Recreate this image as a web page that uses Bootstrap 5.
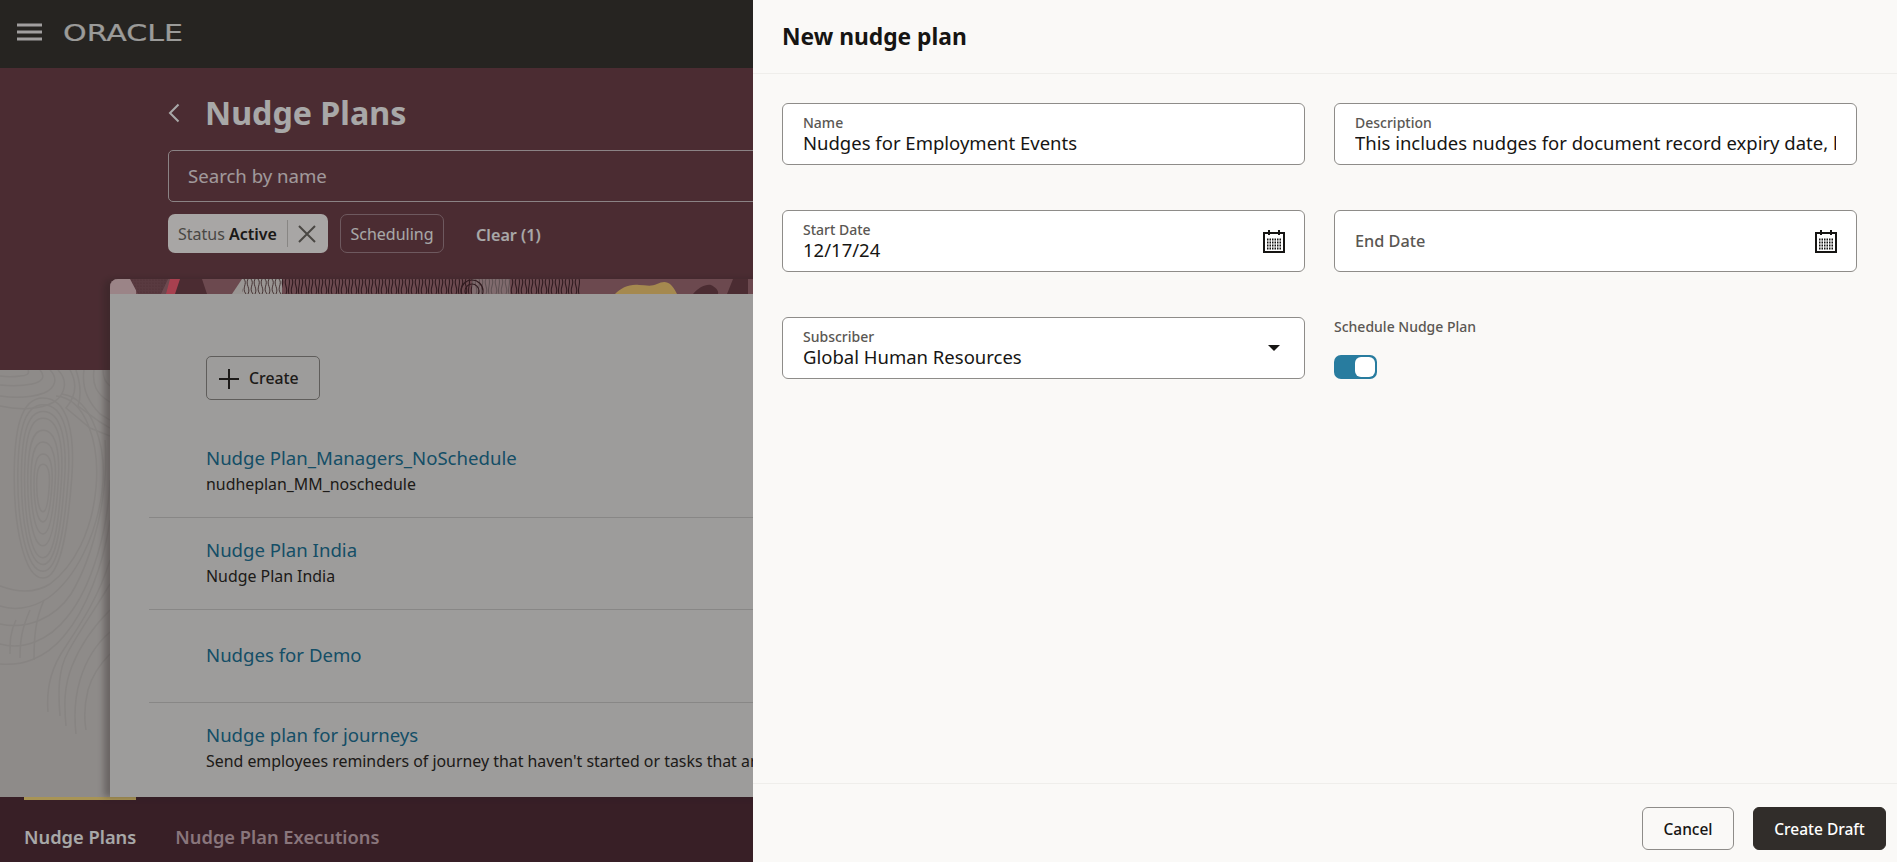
<!DOCTYPE html>
<html lang="en">
<head>
<meta charset="utf-8">
<title>Nudge Plans</title>
<link href="https://cdn.jsdelivr.net/npm/bootstrap@5.3.0/dist/css/bootstrap.min.css" rel="stylesheet">
<style>
html,body{height:100%;overflow:hidden}
body{font-family:"Noto Sans",sans-serif;color:#2d2a27;background:#73444d}
.shell{height:862px}
.topbar{height:68px;background:#3b3732;padding:0 16px;gap:20px;flex:none}
.burger{margin-top:-5px}
.wordmark{margin-top:-3px;overflow:visible}
.stage{min-height:0;background:#73444d}
.gutter{width:110px}
.gutter-top{height:302px;background:#73444d}
.gutter-art{width:110px;height:427px;background:#d8d3d0;display:block}
.center{margin-right:110px;min-width:0}
.hero{padding:20px 0 26px 58px}
.hero-title{height:50px;gap:25px}
.hero-title h1{font-size:32.2px;font-weight:700;color:#fff;margin:0}
.search-box{height:52px;margin-top:12px;border:1px solid #d4c7ca;border-radius:5px;padding:0 19px 2px;font-size:18.6px;color:#f5e9ec;background:transparent}
.search-box::placeholder{color:#f5e9ec;opacity:1}
.chips{margin-top:12px;height:39px;gap:12px}
.chip-on{height:39px;width:160px;background:#fffcfa;border-radius:7px;font-size:16px;color:#706c67;padding:0 10px;white-space:nowrap}
.chip-on b{font-weight:600;color:#2a2724;margin-left:4px}
.chip-sep{width:1px;height:27px;background:#cfcbc8;margin:0 10px}
.chip-off{height:39px;width:104px;border:1px solid #a88890;border-radius:7px;font-size:16px;color:#fff}
.chip-clear{margin-left:20px;padding-top:3px;font-size:16.2px;font-weight:600;color:#fff}
.sheet{background:#efedeb;border:0;border-radius:8px 8px 0 0;overflow:hidden;height:518px;box-shadow:-6px 0 6px rgba(60,50,50,.35)}
.strip{display:block;height:15px;width:100%}
.sheet-body{padding:62px 0 0 39px}
.btn-create{margin-left:57px;width:114px;height:44px;border:1px solid #908d8a;border-radius:5px;background:transparent;color:#2d2a27;font-size:15.8px;font-weight:500;gap:10px;padding:2px 12px 0}
.plans{margin-top:26px;--bs-list-group-bg:transparent;--bs-list-group-border-color:#cfcdcb}
.plans .list-group-item{height:92px;padding:0 0 0 57px;justify-content:center}
.plans .list-group-item.tall{height:93px}
.plan-link{font-size:18.6px;line-height:26px;color:#22779c;text-decoration:none;margin-top:-2px}
.plan-note{font-size:15.9px;line-height:26px;color:#2d2a27;white-space:nowrap}
.tabbar{height:65px;background:#552f3b;padding-left:24px;gap:39px;flex:none}
.tab-item{height:65px;font-size:18.3px;line-height:26px;font-weight:600;color:#d1b3bc;text-decoration:none;padding-top:27px}
.tab-item.on{color:#fff;box-shadow:inset 0 3px 0 #ffe182}
.page-scrim{position:fixed;inset:0;background:rgba(0,0,0,.34);z-index:1040}
.panel{--bs-offcanvas-width:1144px;background:#faf9f7;border-left:0!important;color:#161513}
.panel-head{height:74px;padding:0 29px;border-bottom:1px solid #efeeeb}
.panel-head h2{font-size:22.8px;font-weight:700;margin:0;color:#161513}
.panel-main{padding:29px 40px 0 29px;flex:1 1 auto}
.form-layout{display:grid;grid-template-columns:1fr 1fr;column-gap:29px;row-gap:45px}
.fld{height:62px;background:#fff;border:1px solid #8e8c89;border-radius:6px;padding:0 20px}
.fld-col{min-width:0;padding-top:11px}
.fld-stack{padding-top:11px;align-self:flex-start}
.fld-icon{margin-right:-2px;flex-shrink:0}
.fld label,.tog-label{display:block;font-size:14px;line-height:16px;color:#5a5753;font-weight:500;margin:0}
.fld input{border:0;padding:0;height:24px;line-height:24px;font-size:18.5px;color:#161513;background:transparent;border-radius:0;box-shadow:none}
.fld label.big{font-size:16.3px;line-height:20px}
.tog-label{margin-top:2px}
.tog-input.form-check-input{display:block;width:43px;height:24px;margin:20px 0 0;float:none;border-radius:7px;border:0;background-color:#287c9f;background-position:right center;background-size:auto;background-image:url("data:image/svg+xml,%3csvg xmlns='http://www.w3.org/2000/svg' width='22' height='24'%3e%3crect x='0' y='2' width='20' height='20' rx='6' fill='%23fff'/%3e%3c/svg%3e")}
.panel-foot{height:79px;flex:none;border-top:1px solid #efeeeb;padding:23px 11px 0 0;gap:19px}
.btn-cancel,.btn-draft{height:43px;font-size:15.5px;font-weight:500;border-radius:6px;padding:2px 0 0}
.btn-cancel{width:92px;background:transparent;border:1px solid #8e8c89;color:#161513}
.btn-draft{width:133px;background:#312d2a;border:1px solid #312d2a;color:#fff}
</style>
</head>
<body>
<div class="shell d-flex flex-column">
  <nav class="topbar d-flex align-items-center">
    <svg class="burger" width="27" height="18" viewBox="0 0 27 18" aria-hidden="true"><path d="M1 2h25M1 9h25M1 16h25" stroke="#f4f2f1" stroke-width="3" fill="none"/></svg>
    <svg class="wordmark" width="121" height="26" viewBox="0 0 121 26" role="img" aria-label="Oracle"><text x="0" y="21" font-family="DejaVu Sans" font-size="23" fill="#ecebe9" stroke="#ecebe9" stroke-width=".15" textLength="120" lengthAdjust="spacingAndGlyphs">ORACLE</text></svg>
  </nav>
  <div class="stage d-flex flex-grow-1">
    <div class="gutter flex-shrink-0">
      <div class="gutter-top"></div>
      <svg class="gutter-art" viewBox="0 0 110 427" aria-hidden="true">
        <defs><path id="drop" d="M43 84c8 0 10 14 9 30s-3 38-9 38-9-20-9-38 2-30 9-30z" fill="none" stroke="#cdc8c5" stroke-width="1.5" vector-effect="non-scaling-stroke"/></defs>
        <use href="#drop" transform="translate(43 118) scale(.7) translate(-43 -118)"/>
        <use href="#drop"/>
        <use href="#drop" transform="translate(43 118) scale(1.35) translate(-43 -118)"/>
        <use href="#drop" transform="translate(43 118) scale(1.7) translate(-43 -118)"/>
        <use href="#drop" transform="translate(43 118) scale(2.05) translate(-43 -118)"/>
        <use href="#drop" transform="translate(43 118) scale(2.4 2.25) translate(-43 -118)"/>
        <use href="#drop" transform="translate(43 118) scale(2.8 2.45) translate(-43 -118)"/>
        <use href="#drop" transform="translate(43 118) scale(3.2 2.65) translate(-43 -118)"/>
        <g fill="none" stroke="#cdc8c5" stroke-width="1.5">
          <path d="M56 26c30 2 44 48 40 92s-22 78-46 96c-16 10-34 8-50 2"/>
          <path d="M62 24c30 4 46 54 40 98s-26 86-54 106c-18 12-36 12-48 8"/>
          <path d="M105 70c4 50-10 114-34 154-16 24-44 36-71 30"/>
          <path d="M110 110c-2 50-18 106-42 136-20 26-46 34-68 28"/>
          <path d="M110 150c-6 44-24 90-46 116-20 24-44 30-64 28"/>
          <path d="M110 190c-10 34-28 62-44 86-14 20-20 40-18 66"/>
          <path d="M110 214c-14 24-30 46-42 68-10 18-10 40-8 64"/>
          <path d="M110 240c-16 16-30 36-38 56-8 20-8 38-6 60"/>
          <path d="M110 262c-14 12-24 28-30 48-6 20-6 36-4 54"/>
          <path d="M110 284c-10 10-18 22-22 36-4 16-4 28-2 40"/>
          <path d="M44 230c-8 18-10 34-10 60M30 240c-8 18-10 30-10 48M16 250c-6 12-6 22-6 34"/>
          <path d="M58 0c10 10 8 24-4 32-14 8-36 8-54 4M50 0c8 8 6 18-6 23-14 5-30 5-44 3M40 0c6 7 2 12-8 14-10 2-22 2-32 1M28 0c2 4-2 6-8 6-6 1-14 1-20 0"/>
          <path d="M70 0c8 14 6 26-4 38l24 20 20 8M76 0c4 12 6 24 2 36l22 16 10 6M84 0c-2 14 2 30 16 44l10 6M94 0c-2 14 2 24 16 32M103 0c0 8 2 12 7 16"/>
        </g>
      </svg>
    </div>
    <div class="center flex-grow-1">
      <div class="hero">
        <div class="hero-title d-flex align-items-center">
          <svg width="12" height="20" viewBox="0 0 12 20" aria-hidden="true"><path d="M10.5 1.5 2 10l8.5 8.5" fill="none" stroke="#fff" stroke-width="2"/></svg>
          <h1>Nudge Plans</h1>
        </div>
        <input class="form-control search-box" placeholder="Search by name" aria-label="Search by name">
        <div class="chips d-flex align-items-center">
          <div class="chip-on d-flex align-items-center">Status <b>Active</b><span class="chip-sep"></span>
            <svg width="18" height="18" class="flex-shrink-0" viewBox="0 0 18 18" aria-hidden="true"><path d="M1 1l16 16M17 1 1 17" stroke="#706c67" stroke-width="2" fill="none"/></svg>
          </div>
          <div class="chip-off d-flex align-items-center justify-content-center">Scheduling</div>
          <div class="chip-clear">Clear (1)</div>
        </div>
      </div>
      <div class="card sheet">
        <svg class="strip" aria-hidden="true">
          <defs>
            <pattern id="grain" width="10" height="15" patternUnits="userSpaceOnUse"><path d="M2 0c3 5-3 9 0 15M6 0c-3 5 3 9 0 15M9 0c2 4-2 10 0 15" fill="none" stroke="#4a2930" stroke-width="1.1"/></pattern>
            <pattern id="grain2" width="7" height="15" patternUnits="userSpaceOnUse"><path d="M1 0c4 5-3 9 2 15M5 0c-3 6 3 9 0 15" fill="none" stroke="#6a4f50" stroke-width="1"/></pattern>
            <pattern id="dots" width="3" height="3" patternUnits="userSpaceOnUse"><rect width="3" height="3" fill="#885861"/><circle cx="1" cy="1" r=".6" fill="#73444d"/></pattern>
          </defs>
          <rect width="1700" height="15" fill="#a47079"/>
          <rect width="26" height="15" fill="#ecc8ce"/>
          <path d="M20 0h38l-7 15H28z" fill="url(#dots)"/>
          <path d="M60 0h11l-4 15H56z" fill="#ff6178"/>
          <path d="M70 0h22l5 15H65z" fill="#73444d"/>
          <path d="M132 0l-10 15h12V0z" fill="#e9e3e0"/>
          <rect x="132" width="40" height="15" fill="#e9e3e0"/>
          <rect x="132" width="40" height="15" fill="url(#grain2)"/>
          <rect x="172" width="298" height="15" fill="url(#grain)"/>
          <rect x="362" width="38" height="15" fill="#e9e3e0" opacity=".45"/>
          <circle cx="362" cy="12" r="11" fill="none" stroke="#4a2930" stroke-width="1.2"/>
          <circle cx="362" cy="12" r="7" fill="none" stroke="#4a2930" stroke-width="1.2"/>
          <path d="M505 15c6-6 14-10 24-9 6 0 12 2 18-1 8-4 14-3 20 10z" fill="#fad079"/>
          <path d="M583 15c5-6 12-10 18-9 4 2 8 5 7 9z" fill="#73444d"/>
          <path d="M617 15l6-15h15v15z" fill="#73444d"/>
        </svg>
        <div class="sheet-body">
          <button type="button" class="btn btn-create d-flex align-items-center">
            <svg width="20" height="20" class="flex-shrink-0" viewBox="0 0 20 20" aria-hidden="true"><path d="M10 0v20M0 10h20" stroke="#2d2a27" stroke-width="2" fill="none"/></svg>
            Create
          </button>
          <div class="list-group list-group-flush plans">
            <div class="list-group-item d-flex flex-column">
              <a class="plan-link" href="#">Nudge Plan_Managers_NoSchedule</a>
              <div class="plan-note">nudheplan_MM_noschedule</div>
            </div>
            <div class="list-group-item d-flex flex-column">
              <a class="plan-link" href="#">Nudge Plan India</a>
              <div class="plan-note">Nudge Plan India</div>
            </div>
            <div class="list-group-item tall d-flex flex-column">
              <a class="plan-link" href="#">Nudges for Demo</a>
            </div>
            <div class="list-group-item d-flex flex-column">
              <a class="plan-link" href="#">Nudge plan for journeys</a>
              <div class="plan-note">Send employees reminders of journey that haven't started or tasks that are overdue</div>
            </div>
          </div>
        </div>
      </div>
    </div>
  </div>
  <div class="tabbar d-flex">
    <a class="tab-item on" href="#">Nudge Plans</a>
    <a class="tab-item" href="#">Nudge Plan Executions</a>
  </div>
</div>

<div class="page-scrim"></div>
<div class="offcanvas offcanvas-end show panel" tabindex="-1" data-bs-backdrop="false" aria-labelledby="planTitle">
  <div class="panel-head d-flex align-items-center flex-shrink-0">
    <h2 id="planTitle">New nudge plan</h2>
  </div>
  <div class="panel-main">
    <div class="form-layout">
      <div class="fld d-flex flex-column fld-col">
        <label for="f1">Name</label>
        <input id="f1" class="form-control" value="Nudges for Employment Events">
      </div>
      <div class="fld d-flex flex-column fld-col">
        <label for="f2">Description</label>
        <input id="f2" class="form-control" value="This includes nudges for document record expiry date, long service awards and probation">
      </div>
      <div class="fld d-flex align-items-center">
        <div class="flex-grow-1 fld-stack">
          <label for="f3">Start Date</label>
          <input id="f3" class="form-control" value="12/17/24">
        </div>
        <svg width="24" height="24" class="fld-icon" viewBox="0 0 24 24" aria-hidden="true"><use href="#cal"/></svg>
      </div>
      <div class="fld d-flex align-items-center justify-content-between">
        <label class="big" for="f4">End Date</label>
        <svg width="24" height="24" class="fld-icon" viewBox="0 0 24 24" aria-hidden="true"><use href="#cal"/></svg>
      </div>
      <div class="fld d-flex align-items-center">
        <div class="flex-grow-1 fld-stack">
          <label for="f5">Subscriber</label>
          <input id="f5" class="form-control" value="Global Human Resources">
        </div>
        <svg width="24" height="24" class="fld-icon" viewBox="0 0 24 24" aria-hidden="true"><path d="M6 9h12l-6 6z" fill="#161513"/></svg>
      </div>
      <div>
        <div class="tog-label">Schedule Nudge Plan</div>
        <div class="form-check form-switch p-0 m-0">
          <input class="form-check-input tog-input" type="checkbox" checked aria-label="Schedule Nudge Plan">
        </div>
      </div>
    </div>
  </div>
  <div class="panel-foot d-flex justify-content-end">
    <button type="button" class="btn btn-cancel">Cancel</button>
    <button type="button" class="btn btn-draft">Create Draft</button>
  </div>
</div>
<svg width="0" height="0" class="d-block" aria-hidden="true"><defs>
  <g id="cal" fill="none" stroke="#161513">
    <rect x="2" y="4" width="20" height="19" stroke-width="2"/>
    <path d="M7 1v5M17 1v5" stroke-width="2"/>
    <path d="M5 10.5h14M5 13.5h14M5 16.5h14M5 19.5h14" stroke-width="1.8" stroke-dasharray="1.5 1"/>
  </g>
</defs></svg>
<script src="https://cdn.jsdelivr.net/npm/bootstrap@5.3.0/dist/js/bootstrap.bundle.min.js"></script>
</body>
</html>
